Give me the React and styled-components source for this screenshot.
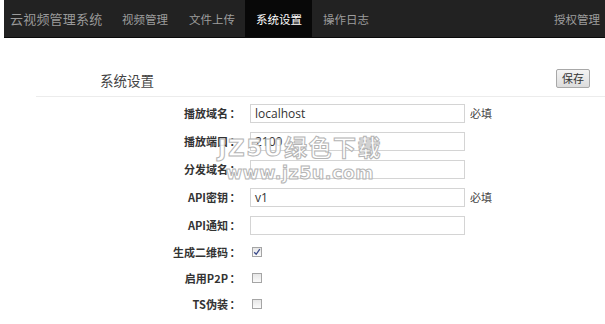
import React from "react";
import styled, { createGlobalStyle } from "styled-components";

const Global = createGlobalStyle`
  html, body { margin: 0; padding: 0; background: #fff; }
  body { font-family: "Microsoft YaHei", "Noto Sans CJK SC", "Liberation Sans", sans-serif; color: #333; }
`;

const Page = styled.div`
  position: relative;
  width: 605px;
  height: 324px;
  overflow: hidden;
`;

const NavBar = styled.div`
  display: flex;
  align-items: stretch;
  height: 37px;
  margin-left: 4px;
  background: #222;
  border-bottom: 1px solid #0a0a0a;
`;

const Brand = styled.div`
  display: flex;
  align-items: center;
  padding: 0 9px 0 6px;
  font-size: 13px;
  color: #9a9a9a;
  letter-spacing: 0.2px;
`;

const NavItem = styled.div`
  display: flex;
  align-items: center;
  padding: 0 10.5px;
  font-size: 11.5px;
  color: ${(p) => (p.$active ? "#fff" : "#9d9d9d")};
  background: ${(p) => (p.$active ? "#080808" : "transparent")};
`;

const Spacer = styled.div`
  flex: 1;
`;

const RightItem = styled(NavItem)`
  padding: 0 5px 0 10px;
`;

const Header = styled.div`
  display: flex;
  align-items: center;
  justify-content: space-between;
  margin: 20px 0 0 36px;
  height: 38px;
  padding: 0 15px 0 64px;
  border-bottom: 1px solid #ececec;
`;

const Title = styled.div`
  font-size: 13.5px;
  color: #444;
  padding-top: 6px;
`;

const SaveButton = styled.button`
  font-family: inherit;
  font-size: 11px;
  color: #333;
  height: 19px;
  width: 34px;
  padding: 0;
  margin-top: 2px;
  border: 1px solid #a8a8a8;
  border-radius: 2px;
  background: linear-gradient(#f4f4f4, #dcdcdc);
`;

const Form = styled.div`
  display: flex;
  flex-direction: column;
  padding-top: 2px;
`;

const Row = styled.div`
  display: flex;
  align-items: center;
  height: ${(p) => (p.$check ? "26px" : "28px")};
`;

const Label = styled.div`
  width: 250px;
  text-align: right;
  font-size: 11px;
  font-weight: bold;
  color: #333;
  padding-right: 8px;
  box-sizing: border-box;
  white-space: nowrap;
`;

const Colon = styled.span`
  display: inline-block;
  width: 14px;
  text-align: center;
`;

const Input = styled.div`
  width: 215px;
  height: 19px;
  box-sizing: border-box;
  border: 1px solid #d4d4d4;
  padding: 0 4px;
  font-size: 12px;
  line-height: 17px;
  color: #333;
  font-family: "Open Sans", "Liberation Sans", sans-serif;
`;

const Hint = styled.span`
  margin-left: 5px;
  font-size: 11px;
  color: #444;
`;

const Check = styled.span`
  display: inline-flex;
  align-items: center;
  justify-content: center;
  margin-left: 2px;
  width: 10px;
  height: 10px;
  box-sizing: border-box;
  border: 1px solid #a5a5a5;
  background: linear-gradient(#e6e6e6, #fafafa);
`;

const Watermark = styled.div`
  position: absolute;
  left: 210px;
  top: 133px;
  width: 180px;
  display: flex;
  flex-direction: column;
  align-items: center;
  pointer-events: none;
  white-space: nowrap;
  font-family: "DejaVu Sans", "Noto Sans CJK SC", sans-serif;
  font-weight: bold;
  color: rgba(255, 255, 255, 0.92);
  -webkit-text-stroke: 1px #b4b4b4;
`;

const WmBig = styled.div`
  font-size: 23px;
  line-height: 30px;
  letter-spacing: 1.5px;
`;

const WmSmall = styled.div`
  font-size: 17.5px;
  line-height: 20px;
  letter-spacing: 0.5px;
`;

const rows = [
  { label: "播放域名", value: "localhost", req: true },
  { label: "播放端口", value: "2100" },
  { label: "分发域名", value: "" },
  { label: "API密钥", value: "v1", req: true },
  { label: "API通知", value: "" },
];

const checks = [
  { label: "生成二维码", on: true },
  { label: "启用P2P", on: false },
  { label: "TS伪装", on: false },
];

export default function App() {
  return (
    <Page>
      <Global />
      <NavBar>
        <Brand>云视频管理系统</Brand>
        <NavItem>视频管理</NavItem>
        <NavItem>文件上传</NavItem>
        <NavItem $active>系统设置</NavItem>
        <NavItem>操作日志</NavItem>
        <Spacer />
        <RightItem>授权管理</RightItem>
      </NavBar>
      <Header>
        <Title>系统设置</Title>
        <SaveButton>保存</SaveButton>
      </Header>
      <Form>
        {rows.map((r) => (
          <Row key={r.label}>
            <Label>
              {r.label}
              <Colon>：</Colon>
            </Label>
            <Input>{r.value}</Input>
            {r.req && <Hint>必填</Hint>}
          </Row>
        ))}
        {checks.map((c) => (
          <Row key={c.label} $check>
            <Label>
              {c.label}
              <Colon>：</Colon>
            </Label>
            <Check>
              {c.on && (
                <svg width="8" height="8" viewBox="0 0 8 8">
                  <path d="M1.2 4.2 L3.2 6.3 L6.8 1.2" fill="none" stroke="#3a4a8a" strokeWidth="1.3" />
                </svg>
              )}
            </Check>
          </Row>
        ))}
      </Form>
      <Watermark>
        <WmBig>JZ5U绿色下载</WmBig>
        <WmSmall>www.jz5u.com</WmSmall>
      </Watermark>
    </Page>
  );
}
